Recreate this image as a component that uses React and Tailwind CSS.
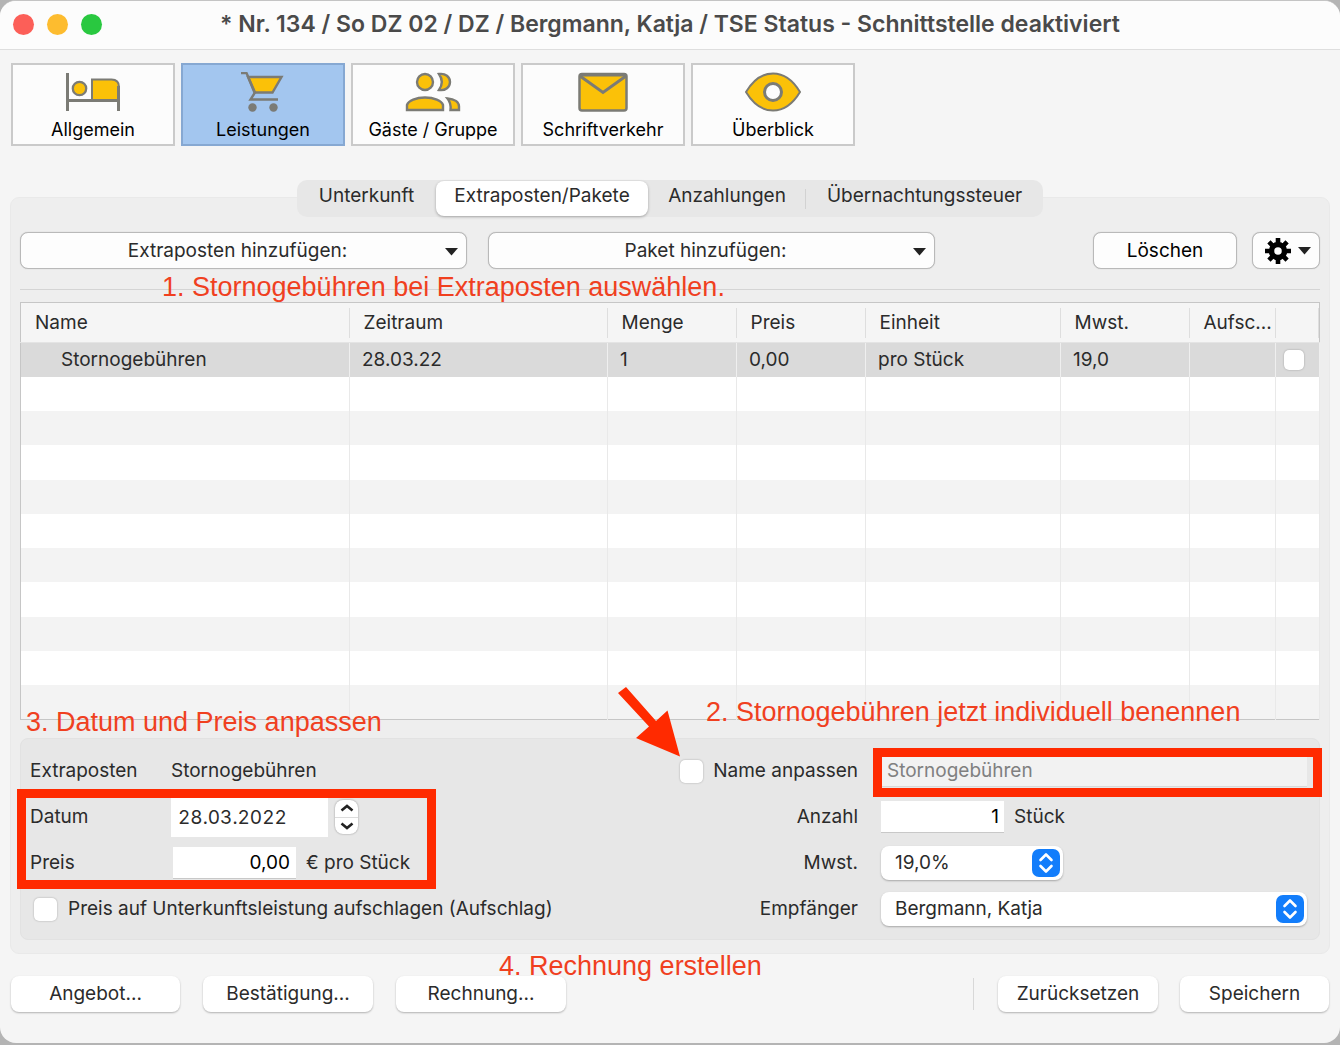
import { useState } from 'react';
import { clsx } from 'clsx';

const BedIcon = () => (
  <svg width="56" height="40" viewBox="0 0 56 40" fill="#fbc108" stroke="#7b7b75" strokeWidth="2">
    <path d="M27 7.500h19.500q7.500 0 7.500 7.500v13.500h-27z" />
    <circle cx="14.500" cy="16.500" r="6.700" strokeWidth="2.300" />
    <path d="M2.500 1v38M2.500 28.500h51.500M53.500 14v25" fill="none" strokeWidth="3" />
  </svg>
);

const CartIcon = () => (
  <svg width="56" height="40" viewBox="0 0 56 40" fill="none" stroke="#7b7b75" strokeWidth="2.400">
    <path d="M13 5h33.500l-9 15.500h-18z" fill="#fbc108" />
    <path d="M6 1h5.500l8.500 19.500-4.500 7h27.500" />
    <circle cx="17.500" cy="35.500" r="4.200" fill="#7b7b75" stroke="none" />
    <circle cx="38.500" cy="35.500" r="4.200" fill="#7b7b75" stroke="none" />
  </svg>
);

const GuestsIcon = () => (
  <svg width="56" height="40" viewBox="0 0 56 40" fill="#fbc108" stroke="#7b7b75" strokeWidth="2.400">
    <circle cx="20" cy="10" r="8" />
    <path d="M2 38v-5c1.500-4.500 9-7.500 18-7.500s16.500 3 18 7.500v5z" />
    <path d="M34 2c6.500-1 11 3 11 8s-4.500 9-11 8c3.500-5 3.500-11 0-16z" />
    <path d="M42.500 26.500c7 .5 11.500 3.500 11.500 8v3.500h-8.500c.5-4.500-.5-8.500-3-11.500z" />
  </svg>
);

const MailIcon = () => (
  <svg width="56" height="40" viewBox="0 0 56 40" fill="#fbc108" stroke="#7b7b75" strokeWidth="2.500">
    <rect x="4.500" y="2" width="47" height="36.500" rx="2.500" />
    <path d="M5 4l23 16.500 23-16.500" fill="none" strokeWidth="3" />
    <path d="M5 3h46" strokeWidth="3" />
  </svg>
);

const EyeIcon = () => (
  <svg width="58" height="40" viewBox="0 0 58 40" fill="#fbc108" stroke="#7b7b75" strokeWidth="2">
    <path d="M2 20c6-10 15-18.500 27-18.500s21 8.500 27 18.500c-6 10-15 18.500-27 18.500s-21-8.500-27-18.500z" />
    <circle cx="29" cy="20" r="8.500" fill="#fcfcfc" strokeWidth="3" />
  </svg>
);

const GearIcon = () => (
  <svg width="26" height="26" viewBox="0 0 26 26" stroke="#000" fill="none">
    <circle cx="13" cy="13" r="6.500" strokeWidth="5.500" />
    <g strokeWidth="4.600">
      <path d="M13 0v6M13 20v6M0 13h6M20 13h6" />
      <path d="M3.900 3.900l4.200 4.200M17.900 17.900l4.200 4.200M3.900 22.100l4.200-4.200M17.900 8.100l4.200-4.200" />
    </g>
  </svg>
);

const Triangle = ({ className }) => (
  <svg className={className} width="13" height="8" viewBox="0 0 13 8" fill="#222">
    <path d="M0 0h13l-6.500 7.500z" />
  </svg>
);

const modules = [
  { id: 'allgemein', label: 'Allgemein', Icon: BedIcon },
  { id: 'leistungen', label: 'Leistungen', Icon: CartIcon },
  { id: 'gaeste', label: 'Gäste / Gruppe', Icon: GuestsIcon },
  { id: 'schrift', label: 'Schriftverkehr', Icon: MailIcon },
  { id: 'ueberblick', label: 'Überblick', Icon: EyeIcon },
];

const tabs = [
  { label: 'Unterkunft', width: 'w-[139px]' },
  { label: 'Extraposten/Pakete', width: 'w-[212px]' },
  { label: 'Anzahlungen', width: 'w-[158px]' },
  { label: 'Übernachtungssteuer', width: 'w-[237px]' },
];

const columns = [
  { label: 'Name' },
  { label: 'Zeitraum', width: 'w-[258px]' },
  { label: 'Menge', width: 'w-[129px]' },
  { label: 'Preis', width: 'w-[129px]' },
  { label: 'Einheit', width: 'w-[195px]' },
  { label: 'Mwst.', width: 'w-[129px]' },
  { label: 'Aufsc...', width: 'w-[86px]' },
  { label: '', width: 'w-[44px]' },
];

const emptyRows = Array.from({ length: 10 }, (_, i) => i);

function PullDown({ label }) {
  return (
    <div className="relative w-[447px]">
      <select
        aria-label={label}
        className="h-[37px] w-full appearance-none rounded-lg border border-[#b9b9b9] bg-[#fdfdfd] pr-3 text-center shadow-[0_0_1px_#b9b9b9] [text-align-last:center]"
      >
        <option>{label}</option>
      </select>
      <Triangle className="pointer-events-none absolute top-4 right-[9px]" />
    </div>
  );
}

function PopUp({ id, value, className }) {
  return (
    <div className={clsx('relative', className)}>
      <select id={id} className="h-[34px] w-full appearance-none rounded-lg bg-white pl-[14px] shadow-[0_1px_2px_rgba(0,0,0,0.28)]">
        <option>{value}</option>
      </select>
      <svg className="pointer-events-none absolute top-[3px] right-[3px]" width="28" height="28" viewBox="0 0 28 28" fill="none">
        <rect width="28" height="28" rx="7" fill="#127dfb" />
        <path d="M8.500 11l5.500-5.500 5.500 5.500M8.500 17l5.500 5.500 5.500-5.500" stroke="#fff" strokeWidth="2.600" strokeLinecap="round" strokeLinejoin="round" />
      </svg>
    </div>
  );
}

function CheckBox({ id, label, className }) {
  return (
    <input
      id={id}
      type="checkbox"
      aria-label={label}
      className={clsx('shrink-0 appearance-none rounded-[5px] bg-white shadow-[0_0_2px_rgba(0,0,0,0.3)] checked:bg-[#127dfb]', className)}
    />
  );
}

function FooterButton({ children, className }) {
  return (
    <button className={clsx('h-9 rounded-lg bg-white text-[#2b2b2b] shadow-[0_1px_2px_rgba(0,0,0,0.28)]', className)}>
      {children}
    </button>
  );
}

// Red instruction text laid over the window
function Note({ children, className }) {
  return (
    <p className={clsx('pointer-events-none absolute z-10 font-["Liberation_Sans",Arial,sans-serif] text-[27px] leading-8 whitespace-nowrap text-[#f0401f]', className)}>
      {children}
    </p>
  );
}

function App() {
  const [module, setModule] = useState('leistungen');
  const [tab, setTab] = useState('Extraposten/Pakete');

  return (
    <div className='min-h-screen bg-[#b4b4b4] pb-[2px] font-["Inter",sans-serif] text-[19px] leading-6 text-[#2b2b2b]'>
      <div className="overflow-hidden rounded-[16px] border-t border-[#c4c4c4] bg-[#f5f5f5] pb-[31px]">
        <header className="relative flex h-[49px] items-center justify-center border-b border-[#dedede] bg-[#fcfcfc] pb-[2px]">
          <div className="absolute left-[13px] flex gap-[13px]">
            <button aria-label="Schließen" className="size-[21px] rounded-full bg-[#fc5f58]" />
            <button aria-label="Minimieren" className="size-[21px] rounded-full bg-[#fdbc2f]" />
            <button aria-label="Maximieren" className="size-[21px] rounded-full bg-[#29c840]" />
          </div>
          <h1 className="text-[23px] font-semibold text-[#4a4a4a]">
            * Nr. 134 / So DZ 02 / DZ / Bergmann, Katja / TSE Status - Schnittstelle deaktiviert
          </h1>
        </header>

        <nav className="flex gap-[6px] px-[11px] pt-[13px]">
          {modules.map(({ id, label, Icon }) => (
            <button
              key={id}
              onClick={() => setModule(id)}
              className={clsx(
                'flex h-[83px] w-[164px] flex-col items-center gap-[6px] border-2 pt-[7px] text-[18px] text-black',
                module === id ? 'border-[#86a8d2] bg-[#a3c6ef]' : 'border-[#cacaca] bg-[#fcfcfc]'
              )}
            >
              <Icon />
              <span>{label}</span>
            </button>
          ))}
        </nav>

        <div role="tablist" className="relative z-10 mx-auto mt-[34px] -mb-5 flex h-[37px] w-fit rounded-[10px] bg-[#e7e7e7]">
          {tabs.map(({ label, width }) => (
            <button
              key={label}
              role="tab"
              aria-selected={tab === label}
              onClick={() => setTab(label)}
              className={clsx(
                'flex justify-center rounded-lg',
                width,
                tab === label ? 'my-px bg-white pt-[3px] shadow-[0_1px_3px_rgba(0,0,0,0.3)]' : 'pt-1',
                label === 'Anzahlungen' && 'rounded-none bg-[linear-gradient(#d2d2d2,#d2d2d2)] bg-[length:1px_20px] bg-[position:right_center] bg-no-repeat'
              )}
            >
              {label}
            </button>
          ))}
        </div>

        <main className="mx-[10px] rounded-[9px] border border-[#e9e9e9] bg-[#eeeeee] px-[9px] pt-[34px] pb-[13px]">
          <div className="relative flex gap-[21px] border-b border-[#d4d4d4] pb-5">
            <PullDown label="Extraposten hinzufügen:" />
            <PullDown label="Paket hinzufügen:" />
            <div className="ml-auto flex gap-[15px]">
              <button className="h-[37px] w-[144px] rounded-lg border border-[#b9b9b9] bg-[#fdfdfd] text-black shadow-[0_0_1px_#b9b9b9]">Löschen</button>
              <button aria-label="Aktionen" className="flex h-[37px] w-[68px] items-center justify-center gap-[7px] rounded-lg border border-[#b9b9b9] bg-[#fdfdfd] pl-1 shadow-[0_0_1px_#b9b9b9]">
                <GearIcon />
                <Triangle />
              </button>
            </div>
            <Note className="top-[39px] left-[142px]">1. Stornogebühren bei Extraposten auswählen.</Note>
          </div>

          <div className="relative mt-3">
            <table className="h-[418px] w-full table-fixed border-collapse border border-[#c6c6c6] text-left">
              <thead>
                <tr className="h-10 bg-[#f5f5f5]">
                  {columns.map(({ label, width }, i) => (
                    <th
                      key={i}
                      className={clsx(
                        'border-b border-[#e4e4e4] bg-[linear-gradient(#dedede,#dedede)] bg-[length:1px_30px] bg-[position:right_center] bg-no-repeat pl-[14px] font-normal whitespace-nowrap',
                        width
                      )}
                    >
                      {label}
                    </th>
                  ))}
                </tr>
              </thead>
              <tbody>
                <tr className="h-[34px] bg-[#dadada] *:border-r *:border-[#efefef] *:pl-3">
                  <td><span className="pl-7">Stornogebühren</span></td>
                  <td>28.03.22</td>
                  <td>1</td>
                  <td>0,00</td>
                  <td>pro Stück</td>
                  <td>19,0</td>
                  <td></td>
                  <td>
                    <CheckBox label="Aufschlag" className="-ml-1 block size-5" />
                  </td>
                </tr>
                {emptyRows.map((row) => (
                  <tr key={row} className="h-[34px] odd:bg-[#f3f3f3] even:bg-white">
                    {columns.map((_, i) => (
                      <td key={i} className="border-r border-[#e9e9e9]"></td>
                    ))}
                  </tr>
                ))}
              </tbody>
            </table>
            <Note className="bottom-[-8px] left-[686px]">2. Stornogebühren jetzt individuell benennen</Note>
            <Note className="bottom-[-18px] left-[6px]">3. Datum und Preis anpassen</Note>
          </div>

          <section className="relative mt-[18px] flex justify-between rounded-lg border border-[#e2e2e2] bg-[#e7e7e7] pt-[9px] pr-3 pb-[7px] pl-[9px]">
            <div className="grid grid-cols-[141px_auto] grid-rows-[repeat(4,46px)] items-center">
              <span>Extraposten</span>
              <span>Stornogebühren</span>
              <label htmlFor="datum">Datum</label>
              <div className="flex items-center gap-[7px]">
                <input id="datum" defaultValue="28.03.2022" className="h-10 w-[157px] bg-white pl-[7px] tabular-nums" />
                <div className="flex h-[34px] w-[23px] flex-col divide-y divide-[#dcdcdc] rounded-lg bg-white shadow-[0_0_2px_rgba(0,0,0,0.4)]">
                  <button aria-label="Später" className="flex flex-1 items-center justify-center">
                    <svg width="14" height="8" viewBox="0 0 14 8" fill="none" stroke="#222" strokeWidth="2.600"><path d="M1.500 6.500l5.500-4.500 5.500 4.500" /></svg>
                  </button>
                  <button aria-label="Früher" className="flex flex-1 items-center justify-center">
                    <svg width="14" height="8" viewBox="0 0 14 8" fill="none" stroke="#222" strokeWidth="2.600"><path d="M1.500 1.500l5.500 4.500 5.500-4.500" /></svg>
                  </button>
                </div>
              </div>
              <label htmlFor="preis">Preis</label>
              <div className="flex items-center gap-[10px] pl-[2px]">
                <input id="preis" defaultValue="0,00" className="h-8 w-[123px] border-b border-[#c8c8c8] bg-white pr-[6px] text-right text-black" />
                <span>€ pro Stück</span>
              </div>
              <div className="col-span-2 flex items-center gap-[11px] pl-1">
                <CheckBox id="aufschlag" className="size-[23px]" />
                <label htmlFor="aufschlag">Preis auf Unterkunftsleistung aufschlagen (Aufschlag)</label>
              </div>
            </div>

            <div className="grid grid-cols-[auto_426px] grid-rows-[repeat(4,46px)] items-center gap-x-[23px]">
              <div className="flex items-center gap-[10px]">
                <CheckBox id="name-anpassen" className="size-[23px]" />
                <label htmlFor="name-anpassen">Name anpassen</label>
              </div>
              <input
                aria-label="Name"
                disabled
                defaultValue="Stornogebühren"
                className="h-8 w-full border-b border-[#d8d8d8] bg-[#f2f2f2] pl-[6px] text-[#808080]"
              />
              <label htmlFor="anzahl" className="text-right">Anzahl</label>
              <div className="flex items-center gap-[10px]">
                <input id="anzahl" defaultValue="1" className="h-8 w-[123px] border-b border-[#c8c8c8] bg-white pr-[5px] text-right text-black" />
                <span>Stück</span>
              </div>
              <label htmlFor="mwst" className="text-right">Mwst.</label>
              <PopUp id="mwst" value="19,0%" className="w-[182px]" />
              <label htmlFor="empfaenger" className="text-right">Empfänger</label>
              <PopUp id="empfaenger" value="Bergmann, Katja" className="w-full" />
            </div>

            {/* Highlight frames and arrow */}
            <div className="pointer-events-none absolute top-[50px] left-[-4px] h-[100px] w-[419px] border-[9px] border-[#ff2a00]" />
            <div className="pointer-events-none absolute top-[9px] right-[-3px] h-[49px] w-[449px] border-[9px] border-[#ff2a00]" />
            <svg className="pointer-events-none absolute top-[-53px] right-[639px] z-10" width="64" height="72" viewBox="0 0 64 72" fill="#ff2a00">
              <path d="M10 1l30 34 11.500-10.500 12.500 46-44-18.500 13-11.500-31-33.500z" />
            </svg>
          </section>
        </main>

        <footer className="relative mx-[11px] mt-[22px] flex items-center">
          <div className="flex gap-[23px]">
            <FooterButton className="w-[169px]">Angebot...</FooterButton>
            <FooterButton className="w-[170px]">Bestätigung...</FooterButton>
            <FooterButton className="w-[170px]">Rechnung...</FooterButton>
          </div>
          <div className="ml-auto flex items-center">
            <span className="mr-6 h-8 w-px bg-[#d8d8d8]" />
            <FooterButton className="mr-[22px] w-[160px]">Zurücksetzen</FooterButton>
            <FooterButton className="w-[149px]">Speichern</FooterButton>
          </div>
          <Note className="bottom-[30px] left-[488px]">4. Rechnung erstellen</Note>
        </footer>
      </div>
    </div>
  );
}

export default App;
